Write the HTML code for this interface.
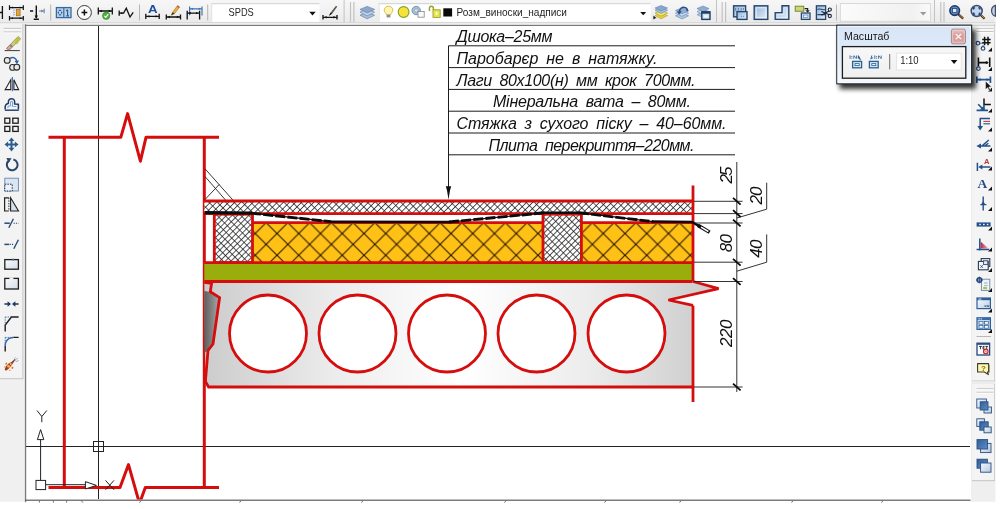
<!DOCTYPE html>
<html>
<head>
<meta charset="utf-8">
<title>SPDS floor section</title>
<style>
html,body{margin:0;padding:0;background:#fff;overflow:hidden;}
body{width:1000px;height:509px;position:relative;font-family:"Liberation Sans",sans-serif;}
svg{position:absolute;left:0;top:0;display:block;}
text{font-family:"Liberation Sans",sans-serif;opacity:0.999;}
</style>
</head>
<body>
<svg id="root" width="1000" height="509" viewBox="0 0 1000 509">
<defs>
  <linearGradient id="tbg" x1="0" y1="0" x2="0" y2="1">
    <stop offset="0" stop-color="#f7f7f7"/><stop offset="1" stop-color="#e9e9e9"/>
  </linearGradient>
  <linearGradient id="slabg" x1="0" y1="0" x2="1" y2="0">
    <stop offset="0" stop-color="#cccccc"/><stop offset="0.25" stop-color="#ececec"/>
    <stop offset="0.5" stop-color="#ffffff"/><stop offset="0.75" stop-color="#ececec"/>
    <stop offset="1" stop-color="#c9c9c9"/>
  </linearGradient>
  <linearGradient id="panelg" x1="0" y1="0" x2="0" y2="1">
    <stop offset="0" stop-color="#d7e5f6"/><stop offset="0.4" stop-color="#deeaf8"/><stop offset="0.85" stop-color="#f0f5fb"/><stop offset="1" stop-color="#f5f8fc"/>
  </linearGradient>
  <!-- hatches -->
  <pattern id="hB1" width="4.3" height="8" patternUnits="userSpaceOnUse" patternTransform="translate(205 201) rotate(45)">
    <rect x="0" y="0" width="0.72" height="8" fill="#161616"/>
  </pattern>
  <pattern id="hB2" width="5.9" height="8" patternUnits="userSpaceOnUse" patternTransform="translate(207 201) rotate(-45)">
    <rect x="0" y="0" width="0.72" height="8" fill="#161616"/>
  </pattern>
  <pattern id="hJ1" width="3.95" height="8" patternUnits="userSpaceOnUse" patternTransform="translate(215 215) rotate(45)">
    <rect x="0" y="0" width="0.72" height="8" fill="#161616"/>
  </pattern>
  <pattern id="hJ2" width="5.6" height="8" patternUnits="userSpaceOnUse" patternTransform="translate(216 215) rotate(-45)">
    <rect x="0" y="0" width="0.72" height="8" fill="#161616"/>
  </pattern>
  <pattern id="hIns" width="21.75" height="21.75" patternUnits="userSpaceOnUse" x="277" y="233.5">
    <rect width="21.75" height="21.75" fill="#ffc116"/>
    <path d="M-1 -1L22.75 22.75M22.75 -1L-1 22.75" stroke="#2a1600" stroke-width="1.1"/>
  </pattern>
  <filter id="sh" x="-20%" y="-20%" width="140%" height="150%">
    <feGaussianBlur stdDeviation="2.6"/>
  </filter>
</defs>

<!-- ===== window chrome backgrounds ===== -->
<rect x="0" y="0" width="1000" height="509" fill="#fff"/>
<rect x="0" y="0" width="995.5" height="25" fill="url(#tbg)"/>
<rect x="0" y="22.4" width="995.5" height="0.9" fill="#cdcdcd"/>
<rect x="0" y="23.3" width="995.5" height="1.6" fill="#f2f2f2"/>
<!-- left column -->
<rect x="0" y="24" width="26" height="477.8" fill="#f0f0f0"/>
<rect x="0" y="24" width="22.5" height="354.5" fill="#f3f3f3"/>
<rect x="22.3" y="24" width="1.2" height="354.5" fill="#cdcdcd"/>
<rect x="0" y="378.2" width="23.4" height="1" fill="#c4c4c4"/>
<!-- right column -->
<rect x="970.4" y="24" width="25.1" height="477.8" fill="#efefef"/>
<rect x="972.4" y="24" width="22" height="456.6" fill="#f4f4f4"/>
<rect x="994" y="24" width="1" height="456.6" fill="#d0d0d0"/>
<rect x="972" y="480.2" width="23" height="1" fill="#c4c4c4"/>

<!-- ===== drawing canvas ===== -->
<rect x="25" y="24.5" width="946" height="476.5" fill="#fff"/>
<rect x="24.9" y="24.8" width="946" height="1.2" fill="#787878"/>
<rect x="971" y="24.7" width="24.5" height="1.2" fill="#cfcfcf"/>
<rect x="24.9" y="24.2" width="1.3" height="478" fill="#7a7a7a"/>
<rect x="25" y="499.6" width="945.5" height="1.2" fill="#5c5c5c"/>
<g stroke="#6e6e6e" stroke-width="1" fill="none"><path d="M39.4 500.5V502.6M53.4 500.5V502.6M66.6 500.5V502.6M81 500.2L82.8 502.6M141 500.5L139.6 502.6M241 500.5L239.6 502.6M363 500.5L361.6 502.6M506 500.5L504.6 502.6M606 500.5L604.6 502.6M681 500.5L679.6 502.6M793 500.5L791.6 502.6M883 500.5L881.6 502.6"/></g>

<g id="canvas" clip-path="url(#cclip)">
<clipPath id="cclip"><rect x="26" y="25.8" width="944.5" height="473.8"/></clipPath>

<!-- crosshair -->
<g stroke="#222" stroke-width="1" shape-rendering="crispEdges">
  <line x1="98.5" y1="26" x2="98.5" y2="499"/>
  <line x1="26" y1="446.5" x2="970" y2="446.5"/>
</g>
<rect x="93.5" y="441.5" width="10" height="10" fill="none" stroke="#222" stroke-width="1"/>

<!-- ===== wall ===== -->
<g fill="none" stroke="#d60d0d" stroke-width="3" stroke-linejoin="round" stroke-linecap="butt">
  <path d="M48.5 137.3H120.8L127.6 113.6L140.4 161.2L146 137.3H219"/>
  <path d="M48.5 487.5H120L128.5 464.6L139.5 503.5L145.3 487.5H219"/>
  <line x1="64.3" y1="137" x2="64.3" y2="487.5"/>
  <line x1="204.3" y1="137" x2="204.3" y2="487.5"/>
</g>

<!-- ===== slab ===== -->
<path d="M204.3 281.5H693L718.6 288.6L668.4 300L693 305.4V387H208.6L205.4 381.5Z" fill="url(#slabg)"/>
<linearGradient id="wdg" x1="0" y1="0" x2="1" y2="0"><stop offset="0" stop-color="#5e5e5e"/><stop offset="1" stop-color="#a9a9a9"/></linearGradient>
<path d="M204.3 291L210.3 292L219.5 297.6L213 344L208 350.5L204.3 353Z" fill="url(#wdg)"/>
<g fill="#fff" stroke="#d60d0d" stroke-width="2.8">
  <circle cx="268" cy="333.5" r="38.5"/>
  <circle cx="357.5" cy="333.5" r="38.5"/>
  <circle cx="447" cy="333.5" r="38.5"/>
  <circle cx="536.5" cy="333.5" r="38.5"/>
  <circle cx="626.5" cy="333.5" r="38.5"/>
</g>
<g fill="none" stroke="#d60d0d" stroke-width="2.8" stroke-linejoin="miter">
  <path d="M204.3 282.3L211.6 283.3L210.3 291.8L219.6 297.6L213 344L208 350.5L205.4 381.5L208.6 387H692.5"/>
  <path d="M693 281.5L718.6 288.6L668.4 300L693 305.4"/>
</g>

<!-- ===== green screed ===== -->
<rect x="204.3" y="262.5" width="488.2" height="19" fill="#99ad0c"/>
<!-- ===== insulation ===== -->
<rect x="252.5" y="222.5" width="290.5" height="40" fill="url(#hIns)"/>
<rect x="581.5" y="222.5" width="111" height="40" fill="url(#hIns)"/>
<!-- joists -->
<rect x="214.3" y="214" width="38.2" height="48.5" fill="#fff"/><rect x="214.3" y="214" width="38.2" height="48.5" fill="url(#hJ1)"/><rect x="214.3" y="214" width="38.2" height="48.5" fill="url(#hJ2)"/>
<rect x="543" y="214" width="38.4" height="48.5" fill="#fff"/><rect x="543" y="214" width="38.4" height="48.5" fill="url(#hJ1)"/><rect x="543" y="214" width="38.4" height="48.5" fill="url(#hJ2)"/>
<!-- board -->
<rect x="204.3" y="201" width="488.2" height="12.7" fill="#fff"/><rect x="204.3" y="201" width="488.2" height="12.7" fill="url(#hB1)"/><rect x="204.3" y="201" width="488.2" height="12.7" fill="url(#hB2)"/>
<!-- corner fillet hatch -->
<g stroke="#222" stroke-width="0.9" fill="none">
  <path d="M205 168.8L233.3 200.5M205 176.5L225.5 200M205 199.5L219.3 184.4"/>
</g>

<!-- red outlines of layers -->
<g fill="none" stroke="#d60d0d" stroke-width="2.8" stroke-linejoin="miter">
  <line x1="204.3" y1="201" x2="692.5" y2="201"/>
  <line x1="204.3" y1="213.7" x2="692.5" y2="213.7"/>
  <rect x="214.3" y="214.2" width="38.2" height="48.4"/>
  <rect x="543" y="214.2" width="38.4" height="48.4"/>
  <path d="M252.5 222.6H543M581.4 222.6H692.5"/>
  <line x1="204.3" y1="262.6" x2="692.5" y2="262.6"/>
  <line x1="204.3" y1="281.5" x2="692.5" y2="281.5"/>
  <path d="M693 185.5V281.5M693 305.4V402"/>
</g>

<!-- vapour barrier -->
<g fill="none" stroke="#0c0c0c" stroke-linejoin="round">
  <path d="M204.5 212.6L252 213.2" stroke-width="3.2"/>
  <path d="M251 213.1L331 221.7M449 222L545 212.7M579 212.7L653 221.7" stroke-width="2.9" stroke-dasharray="10 2.2"/>
  <path d="M251 213.1L331 221.7M449 222L545 212.7M579 212.7L653 221.7" stroke-width="1.2"/>
  <path d="M330 221.7L450 221.9M544 212.8H580M652 221.6L692 222L700 226.6" stroke-width="2.5"/>
  <path d="M698 225.4L709.6 232.2" stroke-width="3.6" stroke-linecap="butt"/>
</g>
<path d="M701 227.2L708.4 231.5" stroke="#fff" stroke-width="1.5" fill="none"/>
<!-- ===== dimensions ===== -->
<g stroke="#1c1c1c" stroke-width="0.9" fill="none">
  <line x1="736.8" y1="162" x2="736.8" y2="392"/>
  <line x1="694" y1="201.3" x2="742.6" y2="201.3"/>
  <line x1="694" y1="213.6" x2="742.6" y2="213.6"/>
  <line x1="694" y1="223" x2="742.6" y2="223"/>
  <line x1="694" y1="262.2" x2="742.6" y2="262.2"/>
  <line x1="694" y1="281.5" x2="742.6" y2="281.5"/>
  <line x1="694" y1="387" x2="742.6" y2="387"/>
  <path d="M766.7 182.7V209.2L736.8 218"/>
  <path d="M766.7 234.4V262.2L736.8 271.2"/>
</g>
<g stroke="#0c0c0c" stroke-width="1.8" fill="none">
  <path d="M733 197.9L740.6 204.7M733 210.2L740.6 217.0M733 219.6L740.6 226.4M733 258.8L740.6 265.6M733 278.1L740.6 284.9M733 383.6L740.6 390.4"/>
</g>

<!-- leader & notes -->
<g stroke="#1c1c1c" stroke-width="1" fill="none">
  <line x1="448.5" y1="45.8" x2="448.5" y2="193"/>
  <line x1="448.5" y1="45.8" x2="735" y2="45.8"/>
  <line x1="448.5" y1="67.6" x2="735" y2="67.6"/>
  <line x1="448.5" y1="89.4" x2="735" y2="89.4"/>
  <line x1="448.5" y1="111.2" x2="735" y2="111.2"/>
  <line x1="448.5" y1="133" x2="735" y2="133"/>
  <line x1="448.5" y1="154.8" x2="735" y2="154.8"/>
</g>
<path d="M445.8 186.2H451.2L450 190.6L448.5 199.8L447 190.6Z" fill="#111"/>

<g id="notes" font-style="italic" font-size="16" fill="#111" lengthAdjust="spacingAndGlyphs" word-spacing="3.5">
  <text x="456.5" y="41.9" textLength="96">Дшока–25мм</text>
  <text x="456.5" y="63.7" textLength="201">Паробарєр не в натяжку.</text>
  <text x="456.5" y="85.5" textLength="239">Лаги 80х100(н) мм крок 700мм.</text>
  <text x="493" y="107.3" textLength="198">Мінеральна вата – 80мм.</text>
  <text x="456.5" y="129.1" textLength="270">Стяжка з сухого піску – 40–60мм.</text>
  <text x="488.5" y="150.9" textLength="206">Плита перекриття–220мм.</text>
</g>
<g id="dims" font-style="italic" font-size="17" fill="#111" lengthAdjust="spacingAndGlyphs" style="opacity:0.999">
  <text transform="translate(732 183.6) rotate(-90)" textLength="17">25</text>
  <text transform="translate(761.8 204.4) rotate(-90)" textLength="17.8">20</text>
  <text transform="translate(732 252.3) rotate(-90)" textLength="18.4">80</text>
  <text transform="translate(762 257.8) rotate(-90)" textLength="18.3">40</text>
  <text transform="translate(731.6 347) rotate(-90)" textLength="27.6">220</text>
</g>

<!-- UCS icon -->
<g stroke="#222" stroke-width="1" fill="#fff">
  <line x1="40.6" y1="480" x2="40.6" y2="439"/>
  <line x1="46" y1="484.7" x2="86" y2="484.7"/>
  <rect x="36" y="480.4" width="9.6" height="9.2"/>
  <path d="M40.6 429.6L37.4 439.6H43.8Z"/>
  <path d="M96.4 485.4L85.4 481.6V489Z"/>
  <path d="M37 410.5L41.8 416.5L46.8 410.5M41.8 416.5V422.2" fill="none"/>
  <path d="M105.5 480.4L114 489.8M114 480.4L105.5 489.8" fill="none"/>
</g>
</g><!-- /canvas -->

<g id="topbar">
  <!-- toolbar segment edges / grips -->
  <g fill="#b4b4b4">
    <rect x="50.2" y="4.5" width="1" height="16"/>
    <rect x="139" y="4.5" width="1" height="16"/>
    <rect x="207.2" y="4.5" width="1" height="16"/>
    <rect x="836" y="4.5" width="1" height="16"/>
  </g>
  <g fill="#c2c2c2">
    <rect x="343.6" y="0" width="1" height="22.6"/>
    <rect x="349.9" y="2" width="1.2" height="20"/><rect x="353.3" y="2" width="1.2" height="20"/>
    <rect x="716" y="0" width="1" height="22.6"/>
    <rect x="721.6" y="2" width="1.2" height="20"/><rect x="725" y="2" width="1.2" height="20"/>
    <rect x="934" y="0" width="1" height="22.6"/>
    <rect x="940.2" y="2" width="1.2" height="20"/><rect x="943.4" y="2" width="1.2" height="20"/>
  </g>

  <!-- icon 0 partial -->
  <g stroke="#111" stroke-width="1.3" fill="none">
    <path d="M2.4 6V19M0 12.5H2.4"/>
  </g>
  <!-- icon 1 : dim space w/ orange -->
  <g stroke="#111" stroke-width="1.2" fill="none">
    <path d="M9.5 7.6H23.3M9.5 5.3V9.9M23.3 5.3V9.9M9.5 18.2H23.3M9.5 15.9V20.5M23.3 15.9V20.5"/>
  </g>
  <path d="M11 7.6L13 6.6V8.6ZM21.8 7.6L19.8 6.6V8.6ZM11 18.2L13 17.2V19.2ZM21.8 18.2L19.8 17.2V19.2Z" fill="#111"/>
  <rect x="16.3" y="9.6" width="3.8" height="6.2" fill="#e8a534" stroke="#9a6a1a" stroke-width="0.7"/>
  <path d="M14 9.5V16" stroke="#6a8cc0" stroke-width="1" stroke-dasharray="1.3 1"/>
  <!-- icon 2 -->
  <g stroke="#111" stroke-width="1.4" fill="none">
    <path d="M36.3 5.5V18M33.7 19.3H38.9M30 11H33.2"/>
  </g>
  <path d="M34.6 15.5H38L36.3 18.8Z" fill="#111"/>
  <g stroke="#6f87a6" stroke-width="1.1" fill="none"><path d="M39 11H44M44.2 8.8V13.2"/></g>
  <path d="M43.8 11L41.2 9.5V12.5Z" fill="#6f87a6"/>
  <!-- icon 3 : blue two-panel -->
  <rect x="56.4" y="7.6" width="14.6" height="10" fill="#b9d1e8" stroke="#356aa0" stroke-width="1.3"/>
  <path d="M63.8 7.6V17.6" stroke="#356aa0" stroke-width="1.2"/>
  <path d="M60 9.2L61.6 11H58.4ZM60 16L61.6 14.2H58.4ZM57.4 12.6L59 11.2V14ZM62.7 12.6L61 11.2V14Z" fill="#2c5f96"/>
  <path d="M67.6 9.6V15.8M66.2 11L67.6 9.6M66.3 15.8H69" stroke="#2c5f96" stroke-width="1.2" fill="none"/>
  <!-- icon 4 : circle plus -->
  <circle cx="84.4" cy="12.5" r="7" fill="#fbfbfb" stroke="#3a3a3a" stroke-width="1"/>
  <path d="M84.4 9.6V15.4M81.5 12.5H87.3" stroke="#111" stroke-width="1.5"/>
  <!-- icon 5 : dim w/ green check -->
  <g stroke="#111" stroke-width="1.3" fill="none"><path d="M98.3 11H112.3M98.3 7.5V14.5M112.3 7.5V14.5"/></g>
  <path d="M99.5 11L102 9.7V12.3ZM111.2 11L108.7 9.7V12.3Z" fill="#111"/>
  <circle cx="106.2" cy="15.8" r="3.7" fill="#4cae3c" stroke="#2f8a26" stroke-width="0.6"/>
  <path d="M104.3 15.8L105.8 17.4L108.3 14.2" stroke="#fff" stroke-width="1.1" fill="none"/>
  <!-- icon 6 : jog -->
  <g stroke="#111" stroke-width="1.3" fill="none" stroke-linejoin="miter">
    <path d="M119.2 10.4V15.8M119.2 13.1H123.6L126.3 8.2L130 17L133.2 12.3"/>
  </g>
  <path d="M120 13.1L122.4 11.9V14.3Z" fill="#111"/>
  <!-- icon 7 : A dim -->
  <text x="148" y="13.4" font-size="10.5" font-weight="bold" fill="#1f4f9c" textLength="9.6" lengthAdjust="spacingAndGlyphs">A</text>
  <g stroke="#111" stroke-width="1.3" fill="none"><path d="M145.8 16.4H159.2M145.8 13.8V19M159.2 13.8V19"/></g>
  <path d="M147 16.4L149.4 15.2V17.6ZM158 16.4L155.6 15.2V17.6Z" fill="#111"/>
  <!-- icon 8 : pencil dim -->
  <g stroke="#111" stroke-width="1.3" fill="none"><path d="M166.3 17H180.5M166.3 14.4V19.6M180.5 14.4V19.6"/></g>
  <path d="M167.5 17L169.9 15.8V18.2ZM179.3 17L176.9 15.8V18.2Z" fill="#111"/>
  <path d="M171.3 15.2L172.6 12.2L177.6 5.6L179.6 7L174.6 13.6Z" fill="#e9b13a" stroke="#a36b1d" stroke-width="0.6"/>
  <path d="M171.3 15.2L172.6 12.2L174.6 13.6Z" fill="#333"/>
  <path d="M177.6 5.6L179.6 7L178.8 8.1L176.8 6.7Z" fill="#d05a4a"/>
  <!-- icon 9 : blue + black dims -->
  <g stroke="#3c73b4" stroke-width="1.2" fill="none"><path d="M189.6 8.8H202M189.6 6.6V15.2M202 6.6V15.6"/></g>
  <path d="M190.8 8.8L193 7.7V9.9ZM200.9 8.8L198.7 7.7V9.9Z" fill="#3c73b4"/>
  <g stroke="#111" stroke-width="1.3" fill="none"><path d="M187.2 13.1H199.6M187.2 10.8V19.6M199.6 10.8V19.6"/></g>
  <path d="M188.4 13.1L190.8 11.9V14.3ZM198.4 13.1L196 11.9V14.3Z" fill="#111"/>

  <!-- combo SPDS -->
  <rect x="211.2" y="3.2" width="108.2" height="18.6" fill="#fff"/>
  <rect x="211.2" y="3.2" width="108.2" height="1" fill="#cfcfcf"/>
  <rect x="211.2" y="3.2" width="1" height="18.6" fill="#e0e0e0"/>
  <text x="228.6" y="16.3" font-size="10.8" fill="#2a2a2a" textLength="25.2" lengthAdjust="spacingAndGlyphs">SPDS</text>
  <path d="M309.3 11.8H315.7L312.5 15.5Z" fill="#111"/>
  <!-- brush dim icon -->
  <g stroke="#111" stroke-width="1.3" fill="none"><path d="M323 17.3H337M323 15V19.6M337 15V19.6"/></g>
  <path d="M324.2 17.3L326.6 16.1V18.5ZM335.8 17.3L333.4 16.1V18.5Z" fill="#111"/>
  <path d="M329 15.8L330.6 12.8L336 5.8L337.2 6.8L332 13.8Z" fill="#5a5048"/>
  <path d="M329 15.8L330.6 12.8L332 13.8Z" fill="#111"/>

  <!-- layers icon -->
  <g stroke="#6585ab" stroke-width="0.7">
    <path d="M360 15.2L367.2 12.2L374.6 15.2L367.2 18.8Z" fill="#a9bfd9"/>
    <path d="M360 12.2L367.2 9.2L374.6 12.2L367.2 15.8Z" fill="#c6d6e8"/>
    <path d="M360 9.4L367.2 6.4L374.6 9.4L367.2 13Z" fill="#8ba8ca"/>
  </g>
  <!-- combo layers -->
  <rect x="378.6" y="3.2" width="272" height="18.6" fill="#fff"/>
  <rect x="378.6" y="3.2" width="272" height="1" fill="#cfcfcf"/>
  <rect x="378.6" y="3.2" width="1" height="18.6" fill="#e0e0e0"/>
  <!-- bulb -->
  <path d="M388.5 6.2C391.6 6.2 392.8 8.4 392.8 10C392.8 12 391 13 390.6 14.6H386.4C386 13 384.2 12 384.2 10C384.2 8.4 385.4 6.2 388.5 6.2Z" fill="#fff6a6" stroke="#b9a53a" stroke-width="0.7"/>
  <rect x="386.6" y="14.8" width="3.8" height="2.6" fill="#8c8ca0"/>
  <!-- sun -->
  <circle cx="403.6" cy="12" r="5.4" fill="#f7e23c" stroke="#7fa02c" stroke-width="1.1"/>
  <!-- viewport -->
  <circle cx="416.2" cy="10.5" r="4.2" fill="#a9c0d6" stroke="#6f8aa6" stroke-width="0.9"/>
  <circle cx="416.2" cy="10.5" r="1.8" fill="#d6e3ef" stroke="#7f9ab5" stroke-width="0.6"/>
  <rect x="418" y="11.4" width="6.2" height="5.8" fill="#fafafa" stroke="#7d8791" stroke-width="0.8"/>
  <!-- lock -->
  <path d="M429.4 11V8.6C429.4 6.8 430.4 6.2 431.4 6.2C432.6 6.2 433.4 7 433.4 8.6V10.4" fill="none" stroke="#9aa02a" stroke-width="1.4"/>
  <rect x="433" y="9.8" width="7.2" height="7.6" fill="#e6e64a" stroke="#9aa02a" stroke-width="0.9"/>
  <rect x="435.6" y="12" width="2" height="3" fill="#fafad0"/>
  <!-- black square -->
  <rect x="443.3" y="8.3" width="8.8" height="8.2" fill="#0a0a0a"/>
  <text x="456.6" y="16.2" font-size="11" fill="#1e1e1e" textLength="110.4" lengthAdjust="spacingAndGlyphs">Розм_виноски_надписи</text>
  <path d="M640.2 11.9H646.2L643.2 15.2Z" fill="#111"/>

  <!-- layer tool icons -->
  <g stroke="#5c86b8" stroke-width="0.6">
    <path d="M655 15.6L661 13L667.6 15.6L661 18.8Z" fill="#e7d23e" stroke="#a8962a"/>
    <path d="M655 13L661 10.4L667.6 13L661 16.2Z" fill="#f1e56a" stroke="#a8962a"/>
    <path d="M655 10.2L661 7.6L667.6 10.2L661 13.4Z" fill="#adc0d8"/>
    <path d="M655 8L661 5.6L667.6 8L661 11Z" fill="#8da8c8"/>
  </g>
  <path d="M653.4 19.6V15.6L656.6 18.2L655.2 18.2Z" fill="#111"/>
  <g stroke="#5c86b8" stroke-width="0.6">
    <path d="M675.4 15.8L682 13L688.6 15.8L682 19Z" fill="#b4c6dc"/>
    <path d="M675.4 13.2L682 10.4L688.6 13.2L682 16.4Z" fill="#cbd8e8"/>
    <path d="M675.4 10.6L682 7.8L688.6 10.6L682 13.8Z" fill="#93adcc"/>
  </g>
  <path d="M679.4 12.4C679.4 8.4 682.4 6.2 685.4 7.6C687 8.4 687.6 10 687.4 11.4" fill="none" stroke="#274f8a" stroke-width="1.5"/>
  <path d="M676.8 11.4L681.8 11.2L679.2 14.8Z" fill="#274f8a"/>
  <g stroke="#5c86b8" stroke-width="0.6">
    <path d="M697 14.6L703 12L709 14.6L703 17.6Z" fill="#b4c6dc"/>
    <path d="M697 11.6L703 9L709 11.6L703 14.6Z" fill="#cbd8e8"/>
    <path d="M697 8.6L703 6L709 8.6L703 11.6Z" fill="#93adcc"/>
  </g>
  <rect x="701.8" y="11.8" width="8.2" height="7.6" fill="#d3e0ee" stroke="#1f3c62" stroke-width="1.4"/>
  <rect x="701.8" y="11.8" width="8.2" height="1.9" fill="#1f3c62"/>
  <rect x="704" y="15.4" width="4" height="2" fill="#f0f5fa"/>

  <!-- viewport icons -->
  <linearGradient id="vg" x1="0" y1="0" x2="1" y2="1"><stop offset="0" stop-color="#93b4d8"/><stop offset="1" stop-color="#e6eff9"/></linearGradient>
  <g stroke="#27476f" stroke-width="1.4">
    <rect x="733.6" y="5.8" width="12" height="11" fill="url(#vg)"/>
    <rect x="737" y="11.6" width="10" height="7.8" fill="url(#vg)"/>
    <rect x="754.2" y="5.8" width="13.6" height="13.6" fill="url(#vg)"/>
    <path d="M782 5.8H788.8V19.4H775.2V12.6H782Z" fill="url(#vg)"/>
  </g>
  <path d="M735.6 8V10.6M738.4 8V10.6M741.2 8V10.6M743.4 8V10" stroke="#4a6c98" stroke-width="0.8"/>
  <path d="M741 16.4H745" stroke="#5a7ca8" stroke-width="0.8" stroke-dasharray="1 1"/>
  <rect x="756.2" y="7.8" width="9.6" height="9.6" fill="none" stroke="#eaf2fa" stroke-width="0.9"/>
  <path d="M784 7.8H786.8V17.4H777.2V14.6H784Z" fill="none" stroke="#eaf2fa" stroke-width="0.8"/>
  <rect x="795.2" y="6.2" width="8.6" height="5" fill="#cfd877" stroke="#6f7c2c" stroke-width="0.9"/>
  <path d="M804.6 8.6H807.6V10.6" stroke="#222" stroke-width="1.3" fill="none"/>
  <path d="M805.4 10.2H809.8L807.6 12.8Z" fill="#222"/>
  <rect x="801.4" y="13" width="8.6" height="6.4" fill="#d5e4f3" stroke="#27476f" stroke-width="1.3"/>
  <rect x="803.5" y="15" width="4.4" height="2.4" fill="#f2f7fc" stroke="#4a70a4" stroke-width="0.6"/>
  <rect x="816.4" y="5.8" width="9.2" height="13.6" fill="url(#vg)" stroke="#27476f" stroke-width="1.3"/>
  <path d="M817.4 9.4C820 8 822 10.6 825 9.4M817.4 14.6H825" stroke="#27476f" stroke-width="1.1" fill="none"/>
  <g stroke="#1a2238" stroke-width="1.1" fill="#f6f6f6">
    <path d="M821.4 11.4L830 15M821.4 15.2L830 10.6" fill="none"/>
    <circle cx="829.8" cy="9.6" r="1.6"/><circle cx="829.8" cy="16" r="1.6"/>
  </g>

  <!-- disabled combo -->
  <linearGradient id="dcg" x1="0" y1="0" x2="1" y2="0"><stop offset="0" stop-color="#fbfbfb"/><stop offset="0.8" stop-color="#f1f1f1"/><stop offset="1" stop-color="#fafafa"/></linearGradient>
  <rect x="840.3" y="3.6" width="90.2" height="17.6" fill="url(#dcg)" stroke="#d2d2d2" stroke-width="0.8"/>
  <path d="M920 12H926.4L923.2 15.4Z" fill="#9a9a9a"/>

  <!-- zoom icons -->
  <path d="M958.2 14.2L963.2 18.6" stroke="#4a3018" stroke-width="2.2"/>
  <path d="M959 14.6L963 18.2" stroke="#c8903a" stroke-width="0.8"/>
  <circle cx="954.7" cy="10.6" r="4.8" fill="#5f8ac6" stroke="#1c3668" stroke-width="1.6"/>
  <rect x="952.6" y="8.6" width="4.2" height="4" fill="#dbe8f8" stroke="#1c3668" stroke-width="0.7"/>
  <path d="M980.4 14.8L984.6 18.8" stroke="#4a3018" stroke-width="2.2"/>
  <path d="M981.2 15.2L984.4 18.4" stroke="#d8a44a" stroke-width="0.8"/>
  <circle cx="976.7" cy="11" r="5.5" fill="#c2d6ee" stroke="#3c4c6c" stroke-width="1.5"/>
  <path d="M973.6 9.4V7.9H975.1M978.3 7.9H979.8V9.4M979.8 12.6V14.1H978.3M975.1 14.1H973.6V12.6" stroke="#1e3e7a" stroke-width="1.4" fill="none"/>
  <path d="M995.4 5.4C992.4 6.4 991.4 9 991.6 11.2C991.8 13.8 993.2 15.6 995.4 16.2Z" fill="#c4d0de" stroke="#3c4c6c" stroke-width="1.2"/>
</g>

<g id="leftbar">
  <!-- grip -->
  <rect x="3.6" y="27.9" width="17.6" height="1" fill="#bdbdbd"/><rect x="3.6" y="28.9" width="17.6" height="1" fill="#fdfdfd"/>
  <rect x="3.6" y="31.5" width="17.6" height="1" fill="#bdbdbd"/><rect x="3.6" y="32.5" width="17.6" height="1" fill="#fdfdfd"/>
  <!-- 1 erase -->
  <path d="M4.6 50.6H19.8" stroke="#3a3a3a" stroke-width="1"/>
  <path d="M6.6 48.4L9 50.2L20.6 38.8L18 36.6Z" fill="#d8d060" stroke="#6a6a3a" stroke-width="0.6"/>
  <path d="M6.6 48.4L9 50.2L12 47.2L9.6 45.2Z" fill="#dba3a3" stroke="#8a5a5a" stroke-width="0.5"/>
  <path d="M14.6 42.2L17 44.4L20.6 38.8L18 36.6Z" fill="#b8c24a"/>
  <path d="M9.6 45.2L12 47.2L13 46.2L10.6 44.2Z" fill="#7a7a8a"/>
  <!-- 2 copy -->
  <g fill="#e8e8e8" stroke="#2a2a2a" stroke-width="1.1">
    <circle cx="7.2" cy="60.4" r="2.9"/>
    <circle cx="12.6" cy="67.4" r="2.9"/>
    <circle cx="16.8" cy="67.2" r="2.9"/>
  </g>
  <path d="M10 58.4C13 56.4 16.4 58 16.8 61.6" fill="none" stroke="#2f62a0" stroke-width="1.5"/>
  <path d="M14.6 61L19 60.6L17 64.2Z" fill="#2f62a0"/>
  <!-- 3 mirror -->
  <path d="M5.2 89.6H10.8V79.8Z" fill="#f6f6f6" stroke="#222" stroke-width="1.1"/>
  <path d="M18.6 89.6H13.9V79.8Z" fill="#f6f6f6" stroke="#222" stroke-width="1.1"/>
  <path d="M12.4 77V91.2" stroke="#3a72b4" stroke-width="1.1"/>
  <!-- 4 offset -->
  <path d="M5.3 109.4C4.5 105.6 6 103.6 8.4 103.4C7.9 100.2 9.6 98.7 11.8 98.7C14 98.7 15.1 100.4 14.6 104.1L18.4 104.3V109.4" fill="#f2f6fb" stroke="#1f3b60" stroke-width="1.5" stroke-linejoin="round"/>
  <path d="M7.9 108.2C7.6 106.4 8.6 105.6 10.6 105.7C10.2 102.6 10.6 101.2 11.8 101.2C12.9 101.2 12.7 103 12.4 106.3L16.4 106.5" fill="none" stroke="#7ea4d2" stroke-width="1.1"/>
  <path d="M4.8 110.2H18.8" stroke="#1f3b60" stroke-width="1.4"/>
  <!-- 5 array -->
  <g fill="#f4f4f6" stroke="#1e1e1e" stroke-width="1.3">
    <rect x="4.8" y="118.2" width="5" height="5"/><rect x="12.8" y="118.2" width="5.4" height="5"/>
    <rect x="4.8" y="126.4" width="5" height="5"/><rect x="12.8" y="126.4" width="5.4" height="5"/>
  </g>
  <!-- 6 move -->
  <g fill="#2d5c90">
    <path d="M11.5 137.4L14.4 141H12.5V143.4H14.9V141.6L18.5 144.4L14.9 147.2V145.4H12.5V147.8H14.4L11.5 151.4L8.6 147.8H10.5V145.4H8.1V147.2L4.5 144.4L8.1 141.6V143.4H10.5V141H8.6Z"/>
  </g>
  <!-- 7 rotate -->
  <path d="M9.2 160.4A5.4 5.4 0 1 0 13.4 159.6" fill="none" stroke="#2a4668" stroke-width="2"/>
  <path d="M6.4 158L11.6 158.2L8.6 162.8Z" fill="#2a4668"/>
  <!-- 8 scale -->
  <rect x="4.8" y="178.2" width="13.6" height="12.8" fill="#dbe6f3" stroke="#6a88aa" stroke-width="0.9"/>
  <rect x="4.8" y="184.2" width="7.4" height="6.8" fill="#eef3f9" stroke="#1e2e4e" stroke-width="1" stroke-dasharray="1.5 1.1"/>
  <!-- 9 stretch -->
  <path d="M10.6 197.8L18.5 211H10.6Z" fill="#d3e1f0" stroke="#222" stroke-width="1.1"/>
  <path d="M8.8 197.8H4.6V211H8.8" fill="none" stroke="#222" stroke-width="1.2"/>
  <path d="M8.9 197.8V211" stroke="#222" stroke-width="1" stroke-dasharray="1.4 1.2"/>
  <!-- 10 trim -->
  <g stroke="#264a78" fill="none">
    <path d="M4.4 223.2H9.8" stroke-width="1.5"/>
    <path d="M8.8 227.8L13.4 218.8" stroke-width="1.4"/>
    <path d="M13.6 223.2H18.6" stroke-width="1.1" stroke-dasharray="1.2 1.1"/>
  <!-- 11 extend -->
    <path d="M4.4 244.4H9" stroke-width="1.5"/>
    <path d="M9.6 244.4H13.6" stroke-width="1.1" stroke-dasharray="1.2 1.1"/>
    <path d="M13.8 248.8L18.4 239.8" stroke-width="1.4"/>
  </g>
  <!-- 12 break at pt / 13 break -->
  <linearGradient id="brg" x1="0" y1="0" x2="1" y2="1"><stop offset="0" stop-color="#fafbfd"/><stop offset="1" stop-color="#d4dde8"/></linearGradient>
  <rect x="4.8" y="259.6" width="13.6" height="9.6" fill="url(#brg)" stroke="#1e1e1e" stroke-width="1.3"/>
  <rect x="12.6" y="258.6" width="1.4" height="2" fill="#4a7ab8"/>
  <rect x="4.8" y="278.4" width="13.6" height="10.6" fill="url(#brg)" stroke="#1e1e1e" stroke-width="1.3"/>
  <rect x="9.4" y="277.4" width="4" height="2.2" fill="#f3f3f3"/>
  <!-- 14 join -->
  <g stroke="#1c3a60" stroke-width="1.5" fill="none">
    <path d="M4.4 304H10M18.6 304H13"/>
  </g>
  <path d="M11 304L7.6 301.2V306.8ZM12 304L15.4 301.2V306.8Z" fill="#1c3a60"/>
  <!-- 15 chamfer -->
  <g stroke="#1e1e1e" stroke-width="1.4" fill="none"><path d="M18.6 317H11.4L5.2 325V331.6"/></g>
  <path d="M5.2 317H11M5.2 317V324.6" stroke="#3a72b4" stroke-width="1" stroke-dasharray="1.3 1.1" fill="none"/>
  <!-- 16 fillet -->
  <g stroke="#1e1e1e" stroke-width="1.4" fill="none"><path d="M18.6 337.4H13.2M5.2 345.6V351.4"/></g>
  <path d="M13.2 337.4C8.4 337.6 5.4 340.6 5.2 345.6" stroke="#2f66ac" stroke-width="1.5" fill="none"/>
  <path d="M5.2 337.4H12.6M5.2 337.4V345" stroke="#3a72b4" stroke-width="1" stroke-dasharray="1.3 1.1" fill="none"/>
  <!-- 17 explode -->
  <g>
    <path d="M4.6 369.4L6.2 366L9.2 363.2L12.6 361.2L13.6 362.6L11.2 365.8L8.4 369L6 370.8Z" fill="#a8380e"/>
    <path d="M6.2 362.2L7.6 364.2L5 364.6ZM11.6 366.6L13.8 367.8L11.8 369.2ZM4.4 366.2L5.8 366.8L4.6 367.8ZM9.6 369.4L10.8 370.4L9.4 371Z" fill="#d2601e"/>
    <circle cx="8.6" cy="366.2" r="1.5" fill="#f0a848"/>
    <circle cx="10.8" cy="364" r="0.9" fill="#f6c878"/>
    <path d="M12.6 362L15.2 359.6" stroke="#6a3a1a" stroke-width="1.4"/>
    <path d="M14.6 360.4L17.8 358.2M15.8 361.6L18.6 360.6M14.2 358.4L15.6 357.6" stroke="#8ea6c8" stroke-width="0.9"/>
  </g>
</g>

<g id="rightbar">
  <!-- grips -->
  <rect x="976.5" y="28.2" width="17" height="1" fill="#c4c4c4"/><rect x="976.5" y="29.2" width="17" height="1" fill="#fdfdfd"/>
  <rect x="976.5" y="31" width="17" height="1" fill="#c4c4c4"/><rect x="976.5" y="32" width="17" height="1" fill="#fdfdfd"/>
  <rect x="976.5" y="388.2" width="17" height="1" fill="#c4c4c4"/><rect x="976.5" y="389.2" width="17" height="1" fill="#fdfdfd"/>
  <rect x="976.5" y="391.8" width="17" height="1" fill="#c4c4c4"/><rect x="976.5" y="392.8" width="17" height="1" fill="#fdfdfd"/>
  <rect x="972" y="380.4" width="23" height="1" fill="#cdcdcd"/>
  <rect x="972" y="381.4" width="23" height="2.6" fill="#ececec"/>
  <rect x="976.5" y="336" width="14.5" height="1" fill="#b8b8b8"/>
  <!-- flyout corner triangles -->
  <g fill="#111">
    <path d="M992 47.4V51.4H988Z"/><path d="M992 67V71H988Z"/><path d="M992 87.4V91.4H988Z"/>
    <path d="M992 108.4V112.4H988Z"/><path d="M992 127.4V131.4H988Z"/><path d="M992 147.4V151.4H988Z"/>
    <path d="M992 166.4V170.4H988Z"/><path d="M992 186.6V190.6H988Z"/><path d="M992 207V211H988Z"/>
    <path d="M992 226.6V230.6H988Z"/><path d="M992 247.4V251.4H988Z"/><path d="M992 268V272H988Z"/>
    <path d="M992 288V292H988Z"/><path d="M992 308.4V312.4H988Z"/><path d="M992 329V333H988Z"/>
  </g>
  <!-- 1 grid snap -->
  <g stroke="#111" stroke-width="1.5" fill="none">
    <path d="M984.6 36.8V45.2M988 36.8V45.2M982.2 39.4H990.6M982.2 42.8H990.6"/>
  </g>
  <path d="M979.4 43.2H984.4M983 45V47" stroke="#2f5c94" stroke-width="0.9"/>
  <circle cx="977.9" cy="43.2" r="1.8" fill="#eef4fb" stroke="#274c7c" stroke-width="1.2"/>
  <circle cx="983" cy="48.4" r="1.8" fill="#eef4fb" stroke="#274c7c" stroke-width="1.2"/>
  <!-- 2 -->
  <g stroke="#111" stroke-width="1.6" fill="none"><path d="M978.4 57.6V66.8M989.7 57.6V67M979 62.6H988"/></g>
  <path d="M988.8 62.6L985.8 61V64.2Z" fill="#111"/>
  <circle cx="978.4" cy="68.6" r="1.8" fill="#eef4fb" stroke="#274c7c" stroke-width="1.2"/>
  <!-- 3 -->
  <g stroke="#23558f" stroke-width="1.7" fill="none"><path d="M976.8 79.6H990.4M976.8 76.4V83M990.4 76.4V83"/></g>
  <path d="M978 79.6L980.6 78.2V81ZM989.2 79.6L986.6 78.2V81Z" fill="#235088"/>
  <path d="M985.6 81.2V89.6L987.6 87.6L989.2 90.6L990.4 90L988.8 87L991.4 86.8Z" fill="#111" stroke="#fff" stroke-width="0.4"/>
  <!-- 4 -->
  <g stroke="#111" stroke-width="1.5" fill="none"><path d="M984 98.4V104.4H990.8"/></g>
  <g stroke="#23558f" stroke-width="1.6" fill="none"><path d="M976.6 110.4H988M984 104.4V110M978.2 104.2L982.6 108.8"/></g>
  <path d="M984.6 110.6L980 109.6L983.4 106Z" fill="#23558f"/>
  <!-- 5 -->
  <g stroke="#235088" stroke-width="1.5" fill="none"><path d="M980.2 118.6V127M979.6 118.6H990"/></g>
  <path d="M980.2 130.4L977.4 126H983Z" fill="#235088"/>
  <path d="M983.4 121.4H990" stroke="#c8384a" stroke-width="1.1"/><path d="M983.4 123.8H990" stroke="#235088" stroke-width="1.1"/>
  <!-- 6 -->
  <g stroke="#235088" stroke-width="1.4" fill="none"><path d="M979.4 146H990.4M982.4 145.6L988.8 140M984.6 146L988.4 143.2"/></g>
  <path d="M976.4 146L981 143.4V148.6Z" fill="#235088"/>
  <!-- 7 -->
  <text x="984" y="163.6" font-size="7.6" font-weight="bold" fill="#b83838">A</text>
  <g stroke="#235088" stroke-width="1.5" fill="none"><path d="M977.4 162.8V171M980.4 167H990.4"/></g>
  <path d="M978.2 167L982.4 164.6V169.4Z" fill="#235088"/>
  <!-- 8 A serif -->
  <text x="977.6" y="188.4" font-family="Liberation Serif" font-size="13.4" font-weight="bold" fill="#274c84" style="font-family:'Liberation Serif',serif">A</text>
  <!-- 9 -->
  <g stroke="#235088" stroke-width="1.4" fill="none"><path d="M983.2 196.6V210.4M980.4 204.6H986.4"/></g>
  <path d="M983.2 201L981.4 204H985Z" fill="#235088"/>
  <!-- 10 -->
  <rect x="976.6" y="222.4" width="14" height="4.2" fill="#235088"/>
  <rect x="979.2" y="223.8" width="1.6" height="1.4" fill="#e8f0fa"/><rect x="983" y="223.8" width="1.6" height="1.4" fill="#e8f0fa"/><rect x="986.8" y="223.8" width="1.6" height="1.4" fill="#e8f0fa"/>
  <!-- 11 -->
  <linearGradient id="rg11" x1="0" y1="0" x2="1" y2="0"><stop offset="0" stop-color="#b8283c"/><stop offset="1" stop-color="#f0b8c0"/></linearGradient>
  <path d="M980.6 241.6V248.6H988.6Z" fill="url(#rg11)"/>
  <g stroke="#235088" stroke-width="1.5" fill="none"><path d="M979.8 238.4V250.6M976.6 249.4H989.2"/></g>
  <!-- 12 -->
  <rect x="981.2" y="258.6" width="8.6" height="7.8" fill="#f2f5f9" stroke="#2a3a54" stroke-width="1.1"/>
  <rect x="978.4" y="261.4" width="9.8" height="8.4" fill="#f2f5f9" stroke="#2a3a54" stroke-width="1.1"/>
  <rect x="983.4" y="260.8" width="4.4" height="3.8" fill="#dfe8f2" stroke="#2a3a54" stroke-width="0.8"/>
  <path d="M980.4 265.2L982.8 267.8M982.8 265.2L980.4 267.8" stroke="#2a3a54" stroke-width="0.8"/>
  <!-- 13 -->
  <rect x="981.4" y="279.2" width="8.4" height="11.2" fill="#eef3f8" stroke="#6a86a6" stroke-width="0.9"/>
  <path d="M984 283H987.6M984 285.6H987.6" stroke="#8aa0bc" stroke-width="0.8"/>
  <rect x="983.2" y="287" width="3.8" height="2.2" fill="#a8c24a"/>
  <circle cx="979.4" cy="280" r="2.3" fill="#dfe8f2" stroke="#24487e" stroke-width="1.5"/>
  <path d="M979.4 276.6V283.4M976 280H982.8" stroke="#24487e" stroke-width="0.9"/>
  <!-- 14 -->
  <linearGradient id="wg" x1="0" y1="0" x2="1" y2="1"><stop offset="0" stop-color="#fbfdff"/><stop offset="1" stop-color="#b9cde4"/></linearGradient>
  <rect x="977" y="298" width="13.4" height="10.6" fill="url(#wg)" stroke="#2d5f98" stroke-width="1.2"/>
  <rect x="977" y="298" width="13.4" height="2.2" fill="#2d5f98"/>
  <rect x="978.4" y="298.6" width="3" height="1" fill="#dce8f4"/>
  <path d="M984.6 305.2L986.4 307M986.4 305.2L984.6 307M987.2 305.2L989 307M989 305.2L987.2 307" stroke="#24487e" stroke-width="0.7"/>
  <!-- 15 -->
  <rect x="977" y="317.8" width="13.4" height="11.6" fill="#c9daec" stroke="#2d5f98" stroke-width="1.2"/>
  <rect x="977" y="317.8" width="13.4" height="2.2" fill="#3a6aa8"/>
  <rect x="978.4" y="318.4" width="1.4" height="1" fill="#e8f0fa"/><rect x="980.6" y="318.4" width="1.4" height="1" fill="#e8f0fa"/>
  <g fill="#f4f8fc" stroke="#2d5f98" stroke-width="0.7">
    <rect x="979" y="321.6" width="4" height="2.6"/><rect x="984.6" y="321.6" width="4" height="2.6"/>
    <rect x="979" y="325.6" width="4" height="2.6"/><rect x="984.6" y="325.6" width="4" height="2.6"/>
  </g>
  <!-- 16 -->
  <rect x="977" y="343.2" width="12.6" height="11.8" fill="#fbfcfe" stroke="#27477a" stroke-width="1.3"/>
  <rect x="977" y="343.2" width="12.6" height="1.6" fill="#27477a"/>
  <path d="M979 346.4H982M980.5 346.4V349.2M983 346.4V349.2M983 346.4H984.6M983 347.8H984.4M983 349.2H984.6M985.4 346.4H988M986.7 346.4V349.2" stroke="#111" stroke-width="0.8" fill="none"/>
  <circle cx="985.8" cy="351.4" r="2.3" fill="#f6d6d6" stroke="#c02a2a" stroke-width="1.1"/>
  <path d="M984.8 350.4L986.8 352.4" stroke="#c02a2a" stroke-width="0.8"/>
  <!-- 17 help -->
  <path d="M977.6 363.6H988.6V372H987.4L988.4 374.6L984.4 372H977.6Z" fill="#fdf7b4" stroke="#3c3c24" stroke-width="1.1" stroke-linejoin="round"/>
  <path d="M989.4 365V372.6" stroke="#8a8a6a" stroke-width="0.8"/>
  <text x="980.9" y="371" font-size="8" font-weight="bold" fill="#8a6a1a">?</text>
  <!-- 18..21 draw order -->
  <linearGradient id="lsq" x1="0" y1="0" x2="1" y2="1"><stop offset="0" stop-color="#f6f9fc"/><stop offset="1" stop-color="#b4c8e0"/></linearGradient>
  <linearGradient id="dsq" x1="0" y1="0" x2="1" y2="1"><stop offset="0" stop-color="#2f5f9a"/><stop offset="1" stop-color="#5d8cc4"/></linearGradient>
  <g stroke="#2a4f82" stroke-width="0.9">
    <rect x="976.8" y="399" width="9.6" height="9" fill="url(#lsq)"/>
    <rect x="984" y="407" width="7.4" height="6" fill="url(#lsq)"/>
    <rect x="980.2" y="401.8" width="7.8" height="8.2" fill="url(#dsq)"/>

    <rect x="976.8" y="418.8" width="7.6" height="7.6" fill="url(#lsq)"/>
    <rect x="979.8" y="421.8" width="8.4" height="8.4" fill="url(#dsq)"/>
    <rect x="984" y="427" width="7.2" height="5.8" fill="url(#lsq)"/>

    <rect x="980.6" y="443.4" width="10.4" height="9.2" fill="url(#lsq)"/>
    <rect x="977" y="439.6" width="10.6" height="9.4" fill="url(#dsq)"/>

    <rect x="977" y="459.2" width="10.4" height="9" fill="url(#dsq)"/>
    <rect x="980.6" y="463" width="10.4" height="9.2" fill="url(#lsq)"/>
  </g>
</g>

<g id="panel">
  <!-- drop shadow -->
  <rect x="839.5" y="29.5" width="136.5" height="59.5" fill="#000" opacity="0.8" filter="url(#sh)"/>
  <!-- frame -->
  <rect x="836.8" y="25.2" width="134.8" height="58.6" fill="url(#panelg)" stroke="#2b2f36" stroke-width="1.2"/>
  <rect x="838" y="26.4" width="132.4" height="56.2" fill="none" stroke="#f4f9fe" stroke-width="1" opacity="0.9"/>
  <text x="844" y="39.6" font-size="11.8" fill="#151515" textLength="45.4" lengthAdjust="spacingAndGlyphs">Масштаб</text>
  <!-- close button -->
  <linearGradient id="clg" x1="0" y1="0" x2="0" y2="1"><stop offset="0" stop-color="#ecc4c4"/><stop offset="0.5" stop-color="#dc9c9c"/><stop offset="1" stop-color="#e2aaaa"/></linearGradient>
  <rect x="951.4" y="29.2" width="14" height="14.6" rx="1.6" fill="url(#clg)" stroke="#a08888" stroke-width="1"/>
  <rect x="952.4" y="30.2" width="12" height="12.6" rx="1" fill="none" stroke="#f2d6d6" stroke-width="0.8" opacity="0.8"/>
  <path d="M956.2 34.4L960.8 38.8M960.8 34.4L956.2 38.8" stroke="#cf9c9c" stroke-width="3" stroke-linecap="square"/>
  <path d="M956.2 34.4L960.8 38.8M960.8 34.4L956.2 38.8" stroke="#f8ecec" stroke-width="1.5" stroke-linecap="square"/>
  <!-- inner box -->
  <linearGradient id="ibg" x1="0" y1="0" x2="0" y2="1"><stop offset="0" stop-color="#f8f8f8"/><stop offset="1" stop-color="#efefef"/></linearGradient>
  <rect x="842.4" y="46.6" width="123.4" height="31.6" fill="url(#ibg)" stroke="#1d1d1d" stroke-width="1.3"/>
  <!-- icon a -->
  <g fill="#2a5f92">
    <rect x="849.6" y="55.4" width="0.9" height="3.4"/><rect x="851.4" y="56" width="0.9" height="0.9"/><rect x="851.4" y="57.8" width="0.9" height="0.9"/>
    <path d="M853.4 58.8V55.4H854.2L856 57.8V55.4H856.8V58.8H856L854.2 56.4V58.8Z"/>
    <path d="M857.8 55.4H858.8L860.2 58L861 60.2H860L859 58.6L857.8 58.8Z"/>
  </g>
  <rect x="852.6" y="61.4" width="9" height="6.4" fill="#d7e6f4" stroke="#2a6294" stroke-width="1.3"/>
  <rect x="855" y="63.6" width="4.2" height="2" fill="#f2f7fb" stroke="#2a6294" stroke-width="0.8"/>
  <!-- icon b -->
  <g fill="#2a5f92">
    <path d="M870.2 59.6L871.4 55.6H872.4L871.6 58L873 57.2L873.4 58Z"/>
    <rect x="874.4" y="55.4" width="0.9" height="3.4"/><rect x="876.2" y="56" width="0.9" height="0.9"/><rect x="876.2" y="57.8" width="0.9" height="0.9"/>
    <path d="M878.2 58.8V55.4H879L880.8 57.8V55.4H881.6V58.8H880.8L879 56.4V58.8Z"/>
  </g>
  <rect x="869.4" y="61.4" width="8.8" height="6.4" fill="#d7e6f4" stroke="#2a6294" stroke-width="1.3"/>
  <rect x="871.8" y="63.6" width="4" height="2" fill="#f2f7fb" stroke="#2a6294" stroke-width="0.8"/>
  <!-- separator -->
  <rect x="889.2" y="54" width="1" height="15.4" fill="#6e6e6e"/>
  <!-- combo -->
  <rect x="896.6" y="53.2" width="64.6" height="16.8" fill="#fff" stroke="#e2e2e2" stroke-width="0.9"/>
  <text x="900.2" y="64.2" font-size="11.2" fill="#1e1e1e" textLength="18.4" lengthAdjust="spacingAndGlyphs">1:10</text>
  <path d="M950.8 60H957.4L954.1 64Z" fill="#111"/>
</g>

</svg>
</body>
</html>
